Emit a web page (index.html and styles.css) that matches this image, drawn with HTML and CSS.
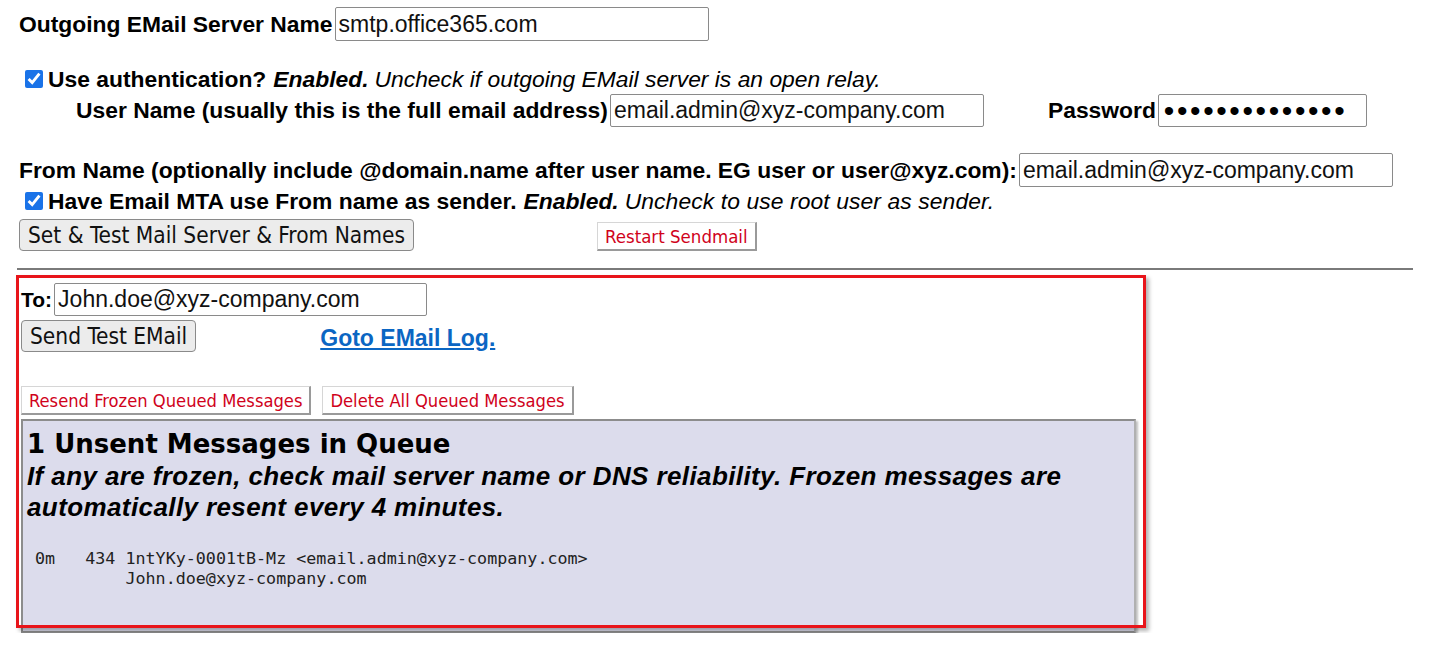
FILE: index.html
```html
<!DOCTYPE html>
<html lang="en">
<head>
    <meta charset="utf-8" />
    <title>Mail Server Settings</title>
    <link rel="stylesheet" href="styles.css">
</head>
<body>
    <form class="mail-form" onsubmit="return false">
        <div class="row server-row">
            <label class="label" for="server">Outgoing EMail Server Name</label>
            <input class="text-input" id="server" type="text" value="smtp.office365.com">
        </div>

        <div class="row check-row auth-row">
            <input class="check" type="checkbox" checked>
            <span class="label">Use authentication?</span>
            <em class="state">Enabled.</em>
            <em class="hint">Uncheck if outgoing EMail server is an open relay.</em>
        </div>

        <div class="row user-row">
            <label class="label" for="user">User Name (usually this is the full email address)</label>
            <input class="text-input" id="user" type="text" value="email.admin@xyz-company.com">
            <label class="label password-label" for="pass">Password</label>
            <input class="text-input password-input" id="pass" type="password" value="secretpassword">
        </div>

        <div class="row from-row">
            <label class="label" for="from">From Name (optionally include @domain.name after user name. EG user or user@xyz.com):</label>
            <input class="text-input" id="from" type="text" value="email.admin@xyz-company.com">
        </div>

        <div class="row check-row mta-row">
            <input class="check" type="checkbox" checked>
            <span class="label">Have Email MTA use From name as sender.</span>
            <em class="state">Enabled.</em>
            <em class="hint">Uncheck to use root user as sender.</em>
        </div>

        <div class="row button-row">
            <button class="gray-button">Set &amp; Test Mail Server &amp; From Names</button>
            <button class="red-button restart-button">Restart Sendmail</button>
        </div>
    </form>

    <hr class="divider">

    <div class="test-section">
        <div class="row to-row">
            <label class="label" for="to">To:</label>
            <input class="text-input to-input" id="to" type="text" value="John.doe@xyz-company.com">
        </div>

        <div class="row send-row">
            <button class="gray-button">Send Test EMail</button>
            <a class="log-link" href="#">Goto EMail Log.</a>
        </div>

        <div class="row queue-buttons">
            <button class="red-button">Resend Frozen Queued Messages</button>
            <button class="red-button">Delete All Queued Messages</button>
        </div>

        <div class="queue-box">
            <h2 class="queue-title">1 Unsent Messages in Queue</h2>
            <p class="queue-note">If any are frozen, check mail server name or DNS reliability. Frozen messages are automatically resent every 4 minutes.</p>
<pre class="queue-list"> 0m   434 1ntYKy-0001tB-Mz &lt;email.admin@xyz-company.com&gt;
          John.doe@xyz-company.com</pre>
        </div>

        <!-- screenshot highlight -->
        <div class="highlight"></div>
    </div>
</body>
</html>
```

FILE: styles.css
```css
body {
    margin: 0;
    padding: 7px 0 0 19px;
    font-family: "Liberation Sans", Arial, sans-serif;
    font-size: 22.85px;
    color: #000;
    background: #fff;
}

.row {
    display: flex;
    align-items: center;
}

.label {
    font-weight: bold;
    white-space: nowrap;
}

.text-input {
    box-sizing: border-box;
    width: 374px;
    height: 34px;
    margin: 0 0 0 2px;
    padding: 0 3px;
    font-family: "Liberation Sans", Arial, sans-serif;
    font-size: 23px;
    color: #111;
    border: 1px solid #8a8a8a;
    border-radius: 2px;
    background: #fff;
}

/* checkbox rows */
.check-row {
    padding-left: 6px;
    height: 24px;
}

.check {
    width: 18px;
    height: 18px;
    margin: 0 5px 0 0;
    accent-color: #1a73e8;
}

.state {
    font-weight: bold;
    margin-left: 7px;
}

.hint {
    margin-left: 6px;
    white-space: nowrap;
}

.auth-row {
    margin-top: 26px;
}

.user-row {
    margin-top: 3px;
    padding-left: 57px;
}

.user-row .text-input {
    height: 33px;
}

.password-label {
    margin-left: 64px;
}

.password-input {
    width: 209px;
    padding-left: 5px;
    letter-spacing: 2.6px;
    font-size: 30px;
    color: #000;
}

.from-row {
    margin-top: 26px;
}

.mta-row {
    margin-top: 2px;
}

.mta-row .hint {
    letter-spacing: 0.1px;
}

/* buttons */
.button-row {
    margin-top: 6px;
    align-items: flex-end;
}

.gray-button {
    height: 32px;
    padding: 0 8px;
    font-family: "DejaVu Sans", Tahoma, sans-serif;
    font-stretch: condensed;
    font-size: 22.5px;
    color: #111;
    background: #ececec;
    border: 1px solid #8a8a8a;
    border-radius: 4px;
    cursor: pointer;
}

.red-button {
    height: 29px;
    padding: 0 7px;
    font-family: "DejaVu Sans", Tahoma, sans-serif;
    font-stretch: condensed;
    font-size: 18.2px;
    color: #d0021b;
    background: #fff;
    border: 1px solid #d6d6d6;
    border-right: 2px solid #9a9a9a;
    border-bottom: 2px solid #9a9a9a;
    cursor: pointer;
}

.restart-button {
    margin-left: 183px;
    font-size: 18.5px;
}

.divider {
    margin: 17px 26px 0 -2px;
    border: 0;
    border-top: 2px solid #7a7a7a;
    height: 0;
}

/* test mail section */
.test-section {
    position: relative;
    padding: 13px 0 0 2px;
}

.to-row .label {
    font-size: 21px;
}

.to-input {
    width: 373px;
    height: 33px;
}

.send-row {
    margin-top: 4px;
}

.log-link {
    margin-left: 124px;
    margin-top: 4px;
    font-weight: bold;
    font-size: 23px;
    color: #0b66c3;
}

.queue-buttons {
    margin-top: 34px;
    gap: 11px;
}

.queue-box {
    box-sizing: border-box;
    width: 1115px;
    height: 214px;
    margin-top: 4px;
    padding: 8px 4px;
    background: #dcdcec;
    border: 2px solid #8c8c8c;
    border-right-color: #b0b0b0;
    box-shadow: 2px 2px 2px rgba(0, 0, 0, 0.25);
}

.queue-title {
    margin: 0;
    font-family: "DejaVu Sans", Verdana, sans-serif;
    font-size: 26px;
    line-height: 30px;
}

.queue-note {
    margin: 2px 0 0;
    font-weight: bold;
    font-style: italic;
    font-size: 26px;
    letter-spacing: 0.4px;
    line-height: 31px;
    width: 1080px;
}

.queue-list {
    margin: 25px 0 0 -2px;
    font-family: "DejaVu Sans Mono", "Liberation Mono", monospace;
    font-size: 16.7px;
    line-height: 20px;
    color: #222;
}

.highlight {
    position: absolute;
    left: -3px;
    top: 5px;
    width: 1124px;
    height: 347px;
    border: 3px solid #e8141a;
    box-shadow: 3px 3px 4px rgba(0, 0, 0, 0.3);
    pointer-events: none;
}
```
